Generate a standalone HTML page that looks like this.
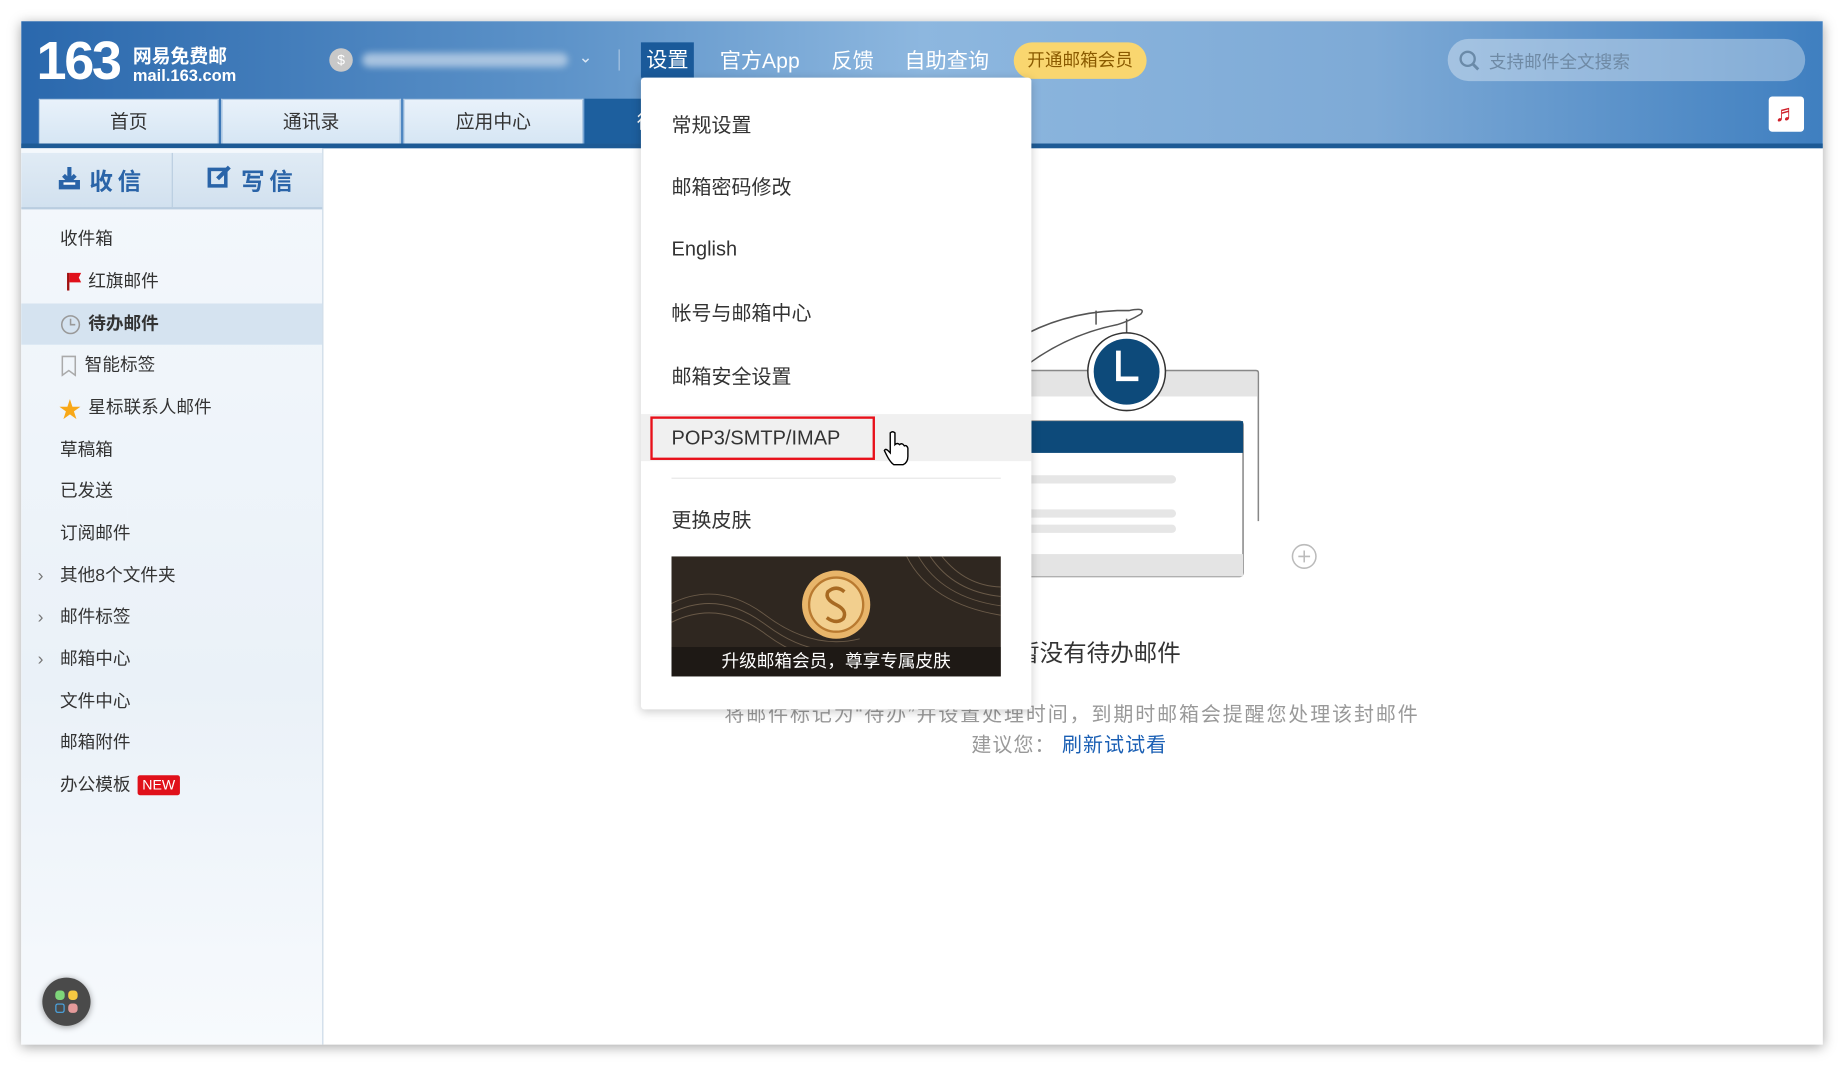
<!DOCTYPE html>
<html><head><meta charset="utf-8"><style>
html,body{margin:0;padding:0;background:#fff;width:1844px;height:1067px;overflow:hidden}
#w{position:absolute;left:0;top:0;width:1568px;height:907px;transform:scale(1.17602,1.1764);transform-origin:0 0;font-family:"Liberation Sans","Noto Sans CJK SC",sans-serif;}
.a{position:absolute}
#frame{left:18px;top:18px;width:1532px;height:870px;background:#fff;box-shadow:0 2px 10px rgba(0,0,0,.35);overflow:hidden}
#hdr{left:0;top:0;width:1532px;height:108px;background:linear-gradient(90deg,#2a68ad 0%,#5d93c9 30%,#8db7df 50%,#7eaad6 75%,#3f7fc0 100%)}
#hdr:after{content:"";position:absolute;left:0;right:0;bottom:0;height:4px;background:#1d5a95}
.tab{top:66px;height:38px;width:153px;background:linear-gradient(#e8f1fa,#d6e6f4);color:#333;font-size:16px;text-align:center;line-height:40px;border:1px solid #b8cfe6;border-bottom:none;box-sizing:border-box}
.nav{top:19px;color:#fff;font-size:18px;line-height:30px}
#side{left:0;top:108px;width:256px;height:762px;background:linear-gradient(#f4f8fc,#eaf1f8 60%,#f7fafd);border-right:1px solid #c9d8e6}
.it{position:absolute;left:33px;font-size:15px;color:#333;line-height:20px}
.mi{position:absolute;left:26px;font-size:17px;color:#333}
</style></head><body><div id="w">
<div class="a" id="frame">
 <div class="a" id="hdr">
  <div class="a" style="left:13px;top:6px;font-size:46px;font-weight:bold;color:#fff;letter-spacing:-2px;font-family:'Liberation Sans',sans-serif">163</div>
  <div class="a" style="left:95px;top:16px;font-size:16px;font-weight:bold;color:#fff">网易免费邮</div>
  <div class="a" style="left:95px;top:38px;font-size:14px;font-weight:bold;color:#fff">mail.163.com</div>
  <div class="a" style="left:262px;top:23px;width:20px;height:20px;border-radius:50%;background:#c8c8c8;color:#fff;font-size:12px;text-align:center;line-height:20px">$</div>
  <div class="a" style="left:290px;top:27px;width:175px;height:12px;background:#a9c4e0;border-radius:6px;filter:blur(3px)"></div>
  <div class="a" style="left:474px;top:22px;color:#dce8f5;font-size:14px">⌄</div>
  <div class="a" style="left:508px;top:24px;width:1px;height:18px;background:#a8c5e2"></div>
  <div class="a nav" style="left:527px;top:18px;width:45px;height:30px;background:#1a5a9a;text-align:center">设置</div>
  <div class="a nav" style="left:594px">官方App</div>
  <div class="a nav" style="left:689px">反馈</div>
  <div class="a nav" style="left:751px">自助查询</div>
  <div class="a" style="left:844px;top:18px;width:113px;height:31px;border-radius:16px;background:#f9d66f;color:#8a5a00;font-size:15px;text-align:center;line-height:31px">开通邮箱会员</div>
  <div class="a" style="left:1213px;top:15px;width:304px;height:36px;border-radius:18px;background:rgba(255,255,255,.35)"></div>
  <svg class="a" style="left:1222px;top:24px" width="20" height="20"><circle cx="8" cy="8" r="6" fill="none" stroke="#6a8aa8" stroke-width="2"/><line x1="12.5" y1="12.5" x2="17" y2="17" stroke="#6a8aa8" stroke-width="2.5"/></svg>
  <div class="a" style="left:1248px;top:24px;font-size:15px;color:#6f8aa5">支持邮件全文搜索</div>
  <div class="a tab" style="left:15px">首页</div>
  <div class="a tab" style="left:170px">通讯录</div>
  <div class="a tab" style="left:325px">应用中心</div>
  <div class="a tab" style="left:479px;background:#1d5f9e;color:#fff;border-color:#1d5f9e">待办邮件</div>
  <div class="a" style="left:1486px;top:64px;width:30px;height:30px;background:#fff;border-radius:3px;color:#d0202a;font-size:20px;text-align:center;line-height:30px;font-weight:bold">♬</div>
 </div>
 <div class="a" id="side">
  <div class="a" style="left:0;top:4px;width:256px;height:46px;background:linear-gradient(#e0ebf5,#d2e1ef);border-bottom:2px solid #b9cde0"></div>
  <div class="a" style="left:128px;top:4px;width:1px;height:46px;background:#b9cde0"></div>
  <svg class="a" style="left:30px;top:15px" width="22" height="22"><path d="M11 1v11M6 8l5 5 5-5" fill="none" stroke="#2a64a8" stroke-width="3.5"/><path d="M2 12v8h18v-8" fill="#2a64a8"/><path d="M6 15h10" stroke="#fff" stroke-width="2"/></svg>
  <div class="a" style="left:58px;top:12px;font-size:20px;font-weight:bold;color:#2a64a8;letter-spacing:4px">收信</div>
  <svg class="a" style="left:158px;top:13px" width="22" height="22"><rect x="2" y="5" width="14" height="14" fill="none" stroke="#2a64a8" stroke-width="3"/><path d="M9 13l10-10" stroke="#2a64a8" stroke-width="3.5"/></svg>
  <div class="a" style="left:187px;top:12px;font-size:20px;font-weight:bold;color:#2a64a8;letter-spacing:4px">写信</div>
  <div class="a" style="left:0;top:132px;width:256px;height:35px;background:#d5e3f0"></div>
  <div class="it" style="top:68px">收件箱</div>
  <div class="it" style="top:104px;left:57px">红旗邮件</div>
  <svg class="a" style="left:38px;top:105px" width="14" height="16"><path d="M2 1v15" stroke="#a01010" stroke-width="2"/><path d="M3 1h10l-2 4 2 4H3z" fill="#e0101a"/></svg>
  <svg class="a" style="left:33px;top:141px" width="18" height="18"><circle cx="9" cy="9" r="7.5" fill="none" stroke="#999" stroke-width="1.3"/><path d="M9 4v5h4" fill="none" stroke="#999" stroke-width="1.3"/></svg>
  <div class="it" style="top:140px;left:57px;font-weight:bold">待办邮件</div>
  <svg class="a" style="left:34px;top:176px" width="14" height="18"><path d="M1 1h11v16l-5.5-4L1 17z" fill="none" stroke="#aaa" stroke-width="1.3"/></svg>
  <div class="it" style="top:175px;left:54px">智能标签</div>
  <div class="a" style="left:32px;top:208px;color:#f8a818;font-size:19px">★</div>
  <div class="it" style="top:211px;left:57px">星标联系人邮件</div>
  <div class="it" style="top:247px">草稿箱</div>
  <div class="it" style="top:282px">已发送</div>
  <div class="it" style="top:318px">订阅邮件</div>
  <div class="it" style="top:354px;left:14px;color:#777">›</div><div class="it" style="top:354px">其他8个文件夹</div>
  <div class="it" style="top:389px;left:14px;color:#777">›</div><div class="it" style="top:389px">邮件标签</div>
  <div class="it" style="top:425px;left:14px;color:#777">›</div><div class="it" style="top:425px">邮箱中心</div>
  <div class="it" style="top:461px">文件中心</div>
  <div class="it" style="top:496px">邮箱附件</div>
  <div class="it" style="top:532px">办公模板</div>
  <div class="a" style="left:99px;top:533px;width:36px;height:17px;background:#e0101a;color:#fff;font-size:12px;line-height:17px;text-align:center;border-radius:2px">NEW</div>
  <div class="a" style="left:18px;top:705px;width:41px;height:41px;border-radius:50%;background:#4a4a4a;box-shadow:0 1px 6px rgba(0,0,0,.4)">
   <div class="a" style="left:11px;top:11px;width:8px;height:8px;border-radius:3px;background:#7ed67a"></div>
   <div class="a" style="left:22px;top:11px;width:8px;height:8px;border-radius:3px;background:#f5c842"></div>
   <div class="a" style="left:11px;top:22px;width:6px;height:6px;border-radius:2px;border:1px solid #4aa8e8"></div>
   <div class="a" style="left:22px;top:22px;width:8px;height:8px;border-radius:3px;background:#e49a9a"></div>
  </div>
 </div>
 <!-- illustration -->
 <svg class="a" style="left:822px;top:213px" width="280" height="280">
  <path d="M20 60 Q60 35 110 33 L120 33 Q135 30 130 36 Q120 42 110 45 Q60 55 20 90" fill="none" stroke="#555" stroke-width="1.3"/>
  <line x1="92" y1="33" x2="92" y2="45" stroke="#555" stroke-width="1.3"/>
  <line x1="118" y1="40" x2="118" y2="52" stroke="#555" stroke-width="1.3"/>
  <path d="M20 84 H228 Q230 84 230 86 V212" fill="none" stroke="#888" stroke-width="1.3"/>
  <rect x="20" y="85" width="209" height="21" fill="#e4e4e4"/>
  <rect x="20" y="127" width="197" height="132" fill="#fff" stroke="#888" stroke-width="1.3" rx="3"/>
  <rect x="20" y="127" width="197" height="27" fill="#0d4a7a"/>
  <rect x="20" y="240" width="197" height="19" fill="#e4e4e4"/>
  <rect x="20" y="173" width="140" height="7" rx="3.5" fill="#e6e6e6"/>
  <rect x="20" y="202" width="140" height="7" rx="3.5" fill="#e6e6e6"/>
  <rect x="20" y="215" width="140" height="7" rx="3.5" fill="#e6e6e6"/>
  <circle cx="118" cy="85" r="33" fill="#fff" stroke="#333" stroke-width="1.3"/>
  <circle cx="118" cy="85" r="28" fill="#0d4a7a"/>
  <path d="M111 67v24h17" fill="none" stroke="#fff" stroke-width="4"/>
  <circle cx="269" cy="242" r="10" fill="none" stroke="#bbb" stroke-width="1.3"/>
  <path d="M264 242h10M269 237v10" stroke="#bbb" stroke-width="1.3"/>
 </svg>
 <div class="a" style="left:846px;top:521px;font-size:20px;color:#333">暂没有待办邮件</div>
 <div class="a" style="left:598px;top:575px;font-size:17px;letter-spacing:1.6px;color:#999">将邮件标记为“待办”并设置处理时间，到期时邮箱会提醒您处理该封邮件</div>
 <div class="a" style="left:808px;top:601px;font-size:17px;letter-spacing:0.9px;color:#999">建议您：</div>
 <div class="a" style="left:885px;top:601px;font-size:17px;letter-spacing:0.9px;color:#1a5fb4">刷新试试看</div>
 <!-- dropdown -->
 <div class="a" style="left:527px;top:48px;width:332px;height:537px;background:#fff;box-shadow:0 2px 8px rgba(0,0,0,.2);border-radius:3px">
  <div class="mi" style="top:26px">常规设置</div>
  <div class="mi" style="top:79px">邮箱密码修改</div>
  <div class="mi" style="top:136px">English</div>
  <div class="mi" style="top:186px">帐号与邮箱中心</div>
  <div class="mi" style="top:240px">邮箱安全设置</div>
  <div class="a" style="left:0;top:286px;width:332px;height:40px;background:#f0f0f0"></div>
  <div class="a" style="left:8px;top:288px;width:187px;height:33px;border:2px solid #e8101a"></div>
  <div class="mi" style="top:297px">POP3/SMTP/IMAP</div>
  <div class="a" style="left:26px;top:340px;width:280px;height:1px;background:#e6e6e6"></div>
  <div class="mi" style="top:362px">更换皮肤</div>
  <div class="a" style="left:26px;top:407px;width:280px;height:102px;background:#2f2720;overflow:hidden">
   <svg class="a" style="left:0;top:0" width="280" height="102"><g fill="none" stroke="#6a5a48" stroke-width="0.8"><path d="M0 40 Q40 20 80 50 T160 70"/><path d="M0 48 Q40 28 80 58 T160 78"/><path d="M0 56 Q40 36 80 66 T160 86"/><path d="M200 0 Q220 40 280 50"/><path d="M210 0 Q230 35 280 42"/><path d="M220 0 Q240 30 280 34"/><path d="M230 0 Q250 25 280 26"/></g>
    <circle cx="140" cy="41" r="29" fill="#e8b56a"/><circle cx="140" cy="41" r="23" fill="#f2cf8e" stroke="#b97a30" stroke-width="2"/>
    <path d="M147 30 Q140 24 133 30 Q130 36 140 41 Q150 46 146 53 Q140 58 132 52" fill="none" stroke="#a86a22" stroke-width="3"/></svg>
   <div class="a" style="left:0;top:77px;width:280px;height:25px;background:#1e1915;color:#fff;font-size:15px;text-align:center;line-height:25px">升级邮箱会员，尊享专属皮肤</div>
  </div>
 </div>
 <svg class="a" style="left:733px;top:348px" width="22" height="30"><path d="M6 2 q2-2 4 0 v10 q2-2 4 0 q2-2 4 1 q2-1 3 2 v7 q0 5-4 7 h-8 q-3-2-6-8 l-2-4 q1-2 3 0 l2 2z" fill="#fff" stroke="#000" stroke-width="1.2"/></svg>
</div>
</div></body></html>
